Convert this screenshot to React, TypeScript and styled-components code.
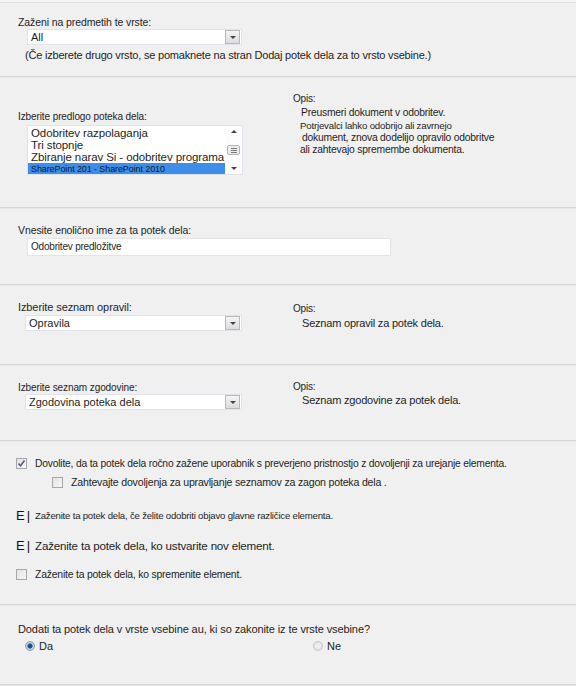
import React from "react";
import styled, { createGlobalStyle } from "styled-components";

const GlobalStyle = createGlobalStyle`
  html, body {
    margin: 0;
    padding: 0;
    background: #f0f0f0;
  }
  body {
    font-family: "Liberation Sans", Arial, sans-serif;
    color: #1e1e1e;
  }
`;

const Page = styled.div`
  width: 576px;
  height: 686px;
  overflow: hidden;
  background: #f0f0f0;
`;

const TopRule = styled.div`
  height: 3px;
  box-sizing: border-box;
  background: #f5f5f5;
  border-bottom: 1px solid #e2e2e2;
`;

// one block of the settings form, with the grey rule under it
const Section = styled.div<{ $h: number; $pt: number }>`
  height: ${(p) => p.$h}px;
  box-sizing: border-box;
  padding: ${(p) => p.$pt}px 0 0 18px;
  border-bottom: 1px solid #d6d6d6;
  box-shadow: 0 1px 0 #e8e8e8;
  display: flex;
`;

const Main = styled.div<{ $wide?: boolean }>`
  width: ${(p) => (p.$wide ? "auto" : "275px")};
  display: flex;
  flex-direction: column;
`;

const Side = styled.div<{ $mt: number }>`
  margin-top: ${(p) => p.$mt}px;
  display: flex;
  flex-direction: column;
`;

const Label = styled.div<{ $size?: number }>`
  font-size: ${(p) => p.$size ?? 10}px;
  line-height: 13px;
  white-space: nowrap;
  letter-spacing: -0.1px;
`;

const Note = styled.div`
  font-size: 11px;
  line-height: 13px;
  white-space: nowrap;
  margin: 4px 0 0 7px;
  letter-spacing: -0.2px;
`;

const DescLine = styled.div<{ $size?: number; $indent?: number; $gap?: number }>`
  font-size: ${(p) => p.$size ?? 10.3}px;
  line-height: 12.3px;
  white-space: nowrap;
  padding-left: ${(p) => p.$indent ?? 7}px;
  margin-top: ${(p) => p.$gap ?? 0}px;
  letter-spacing: -0.2px;
`;

const SelectBox = styled.div<{ $w: number; $ml: number; $mt: number }>`
  margin: ${(p) => p.$mt}px 0 0 ${(p) => p.$ml}px;
  width: ${(p) => p.$w}px;
  height: 16px;
  box-sizing: border-box;
  background: #fff;
  border: 1px solid #e2e3ea;
  display: flex;
  align-items: center;
  font-size: 11px;
`;

const SelectText = styled.span`
  flex: 1;
  padding-left: 3px;
  white-space: nowrap;
`;

const DropButton = styled.span`
  width: 15px;
  height: 14px;
  box-sizing: border-box;
  border: 1px solid #b9b9b9;
  background: linear-gradient(#f4f4f4, #dcdcdc);
  display: flex;
  align-items: center;
  justify-content: center;
  margin-right: 1px;
`;

const Arrow = styled.span<{ $up?: boolean }>`
  width: 0;
  height: 0;
  border-left: 3px solid transparent;
  border-right: 3px solid transparent;
  ${(p) =>
    p.$up ? "border-bottom: 3px solid #444;" : "border-top: 3px solid #444;"}
`;

const ListBox = styled.div`
  margin: 2px 0 0 9px;
  width: 216px;
  height: 50px;
  box-sizing: border-box;
  background: #fff;
  border: 1px solid #e2e3ea;
  display: flex;
  overflow: hidden;
`;

const ListItems = styled.div`
  flex: 1;
  display: flex;
  flex-direction: column;
  padding-top: 1px;
`;

const ListItem = styled.div<{ $selected?: boolean }>`
  font-size: ${(p) => (p.$selected ? 9 : 11.5)}px;
  line-height: 12px;
  padding-left: 3px;
  white-space: nowrap;
  letter-spacing: -0.1px;
  background: ${(p) => (p.$selected ? "#3d8ee8" : "transparent")};
  color: ${(p) => (p.$selected ? "#0c1a33" : "#1e1e1e")};
`;

const ScrollBar = styled.div`
  width: 17px;
  display: flex;
  flex-direction: column;
  align-items: center;
  justify-content: space-between;
  padding: 4px 0;
  box-sizing: border-box;
  background: #fdfdfd;
`;

const Thumb = styled.div`
  width: 13px;
  height: 10px;
  box-sizing: border-box;
  border: 1px solid #b5b5b5;
  border-radius: 2px;
  background: #ececec;
  display: flex;
  flex-direction: column;
  justify-content: center;
  align-items: center;
  gap: 1px;
`;

const Grip = styled.span`
  width: 6px;
  height: 1px;
  background: #7a7a7a;
`;

const TextInput = styled.div`
  margin: 1px 0 0 9px;
  width: 364px;
  height: 18px;
  box-sizing: border-box;
  background: #fff;
  border: 1px solid #e4e4e4;
  font-size: 10px;
  line-height: 16px;
  padding-left: 3px;
  letter-spacing: -0.2px;
`;

const CheckRow = styled.div<{ $ml?: number; $mt: number; $size?: number }>`
  display: flex;
  align-items: center;
  gap: 8px;
  margin: ${(p) => p.$mt}px 0 0 ${(p) => p.$ml ?? 0}px;
  font-size: ${(p) => p.$size ?? 9.5}px;
  white-space: nowrap;
  letter-spacing: -0.2px;
`;

const Box = styled.span`
  width: 11px;
  height: 11px;
  box-sizing: border-box;
  border: 1px solid #a7a7a7;
  background: linear-gradient(135deg, #e2e2e2, #f7f7f7);
  display: flex;
  align-items: center;
  justify-content: center;
  flex: none;
`;

const Broken = styled.span`
  width: 11px;
  font-size: 13px;
  line-height: 13px;
  color: #111;
  flex: none;
  letter-spacing: 2px;
`;

const RadioRow = styled.div`
  display: flex;
  margin: 4px 0 0 7px;
`;

const RadioOption = styled.div<{ $w?: number }>`
  width: ${(p) => (p.$w ? `${p.$w}px` : "auto")};
  display: flex;
  align-items: center;
  gap: 4px;
  font-size: 11px;
`;

const Radio = styled.span<{ $on?: boolean }>`
  width: 10px;
  height: 10px;
  border-radius: 50%;
  box-sizing: border-box;
  border: 1px solid ${(p) => (p.$on ? "#8aa0b8" : "#c4c4c4")};
  background: ${(p) =>
    p.$on
      ? "radial-gradient(circle, #1f4f85 0 2px, #bcd0e4 3px)"
      : "radial-gradient(circle, #f4f4f4, #dedede)"};
  flex: none;
`;

function Select({ value, width, ml, mt }: { value: string; width: number; ml: number; mt: number }) {
  return (
    <SelectBox $w={width} $ml={ml} $mt={mt}>
      <SelectText>{value}</SelectText>
      <DropButton>
        <Arrow />
      </DropButton>
    </SelectBox>
  );
}

function Check({ on }: { on?: boolean }) {
  return (
    <Box>
      {on && (
        <svg width="9" height="9" viewBox="0 0 9 9">
          <path d="M1.5 4.5 L3.5 6.8 L7.5 1.5" fill="none" stroke="#4a5f88" strokeWidth="1.6" />
        </svg>
      )}
    </Box>
  );
}

export default function App() {
  return (
    <>
      <GlobalStyle />
      <Page>
        <TopRule />
        <Section $h={74} $pt={13}>
          <Main>
            <Label $size={10.5}>Zaženi na predmetih te vrste:</Label>
            <Select value="All" width={215} ml={9} mt={0} />
            <Note>(Če izberete drugo vrsto, se pomaknete na stran Dodaj potek dela za to vrsto vsebine.)</Note>
          </Main>
        </Section>

        <Section $h={131} $pt={33}>
          <Main>
            <Label>Izberite predlogo poteka dela:</Label>
            <ListBox>
              <ListItems>
                <ListItem>Odobritev razpolaganja</ListItem>
                <ListItem>Tri stopnje</ListItem>
                <ListItem>Zbiranje narav Si - odobritev programa</ListItem>
                <ListItem $selected>SharePoint 201 - SharePoint 2010</ListItem>
              </ListItems>
              <ScrollBar>
                <Arrow $up />
                <Thumb>
                  <Grip />
                  <Grip />
                  <Grip />
                </Thumb>
                <Arrow />
              </ScrollBar>
            </ListBox>
          </Main>
          <Side $mt={-17}>
            <DescLine $indent={0} $size={10}>Opis:</DescLine>
            <DescLine $indent={8} $gap={2}>Preusmeri dokument v odobritev.</DescLine>
            <DescLine $indent={7} $size={9.7}>Potrjevalci lahko odobrijo ali zavrnejo</DescLine>
            <DescLine $indent={9}>dokument, znova dodelijo opravilo odobritve</DescLine>
            <DescLine $indent={7}>ali zahtevajo spremembe dokumenta.</DescLine>
          </Side>
        </Section>

        <Section $h={77} $pt={16}>
          <Main>
            <Label $size={10.5}>Vnesite enolično ime za ta potek dela:</Label>
            <TextInput>Odobritev predložitve</TextInput>
          </Main>
        </Section>

        <Section $h={80} $pt={16}>
          <Main>
            <Label $size={11}>Izberite seznam opravil:</Label>
            <Select value="Opravila" width={217} ml={7} mt={1} />
          </Main>
          <Side $mt={2}>
            <DescLine $indent={0} $size={10}>Opis:</DescLine>
            <DescLine $indent={9} $size={11} $gap={2}>Seznam opravil za potek dela.</DescLine>
          </Side>
        </Section>

        <Section $h={76} $pt={16}>
          <Main>
            <Label $size={10}>Izberite seznam zgodovine:</Label>
            <Select value="Zgodovina poteka dela" width={217} ml={7} mt={0} />
          </Main>
          <Side $mt={0}>
            <DescLine $indent={0} $size={10}>Opis:</DescLine>
            <DescLine $indent={9} $size={11} $gap={1}>Seznam zgodovine za potek dela.</DescLine>
          </Side>
        </Section>

        <Section $h={164} $pt={17}>
          <Main $wide>
            <CheckRow $mt={0} $ml={-2} $size={10.3}>
              <Check on />
              Dovolite, da ta potek dela ročno zažene uporabnik s preverjeno pristnostjo z dovoljenji za urejanje elementa.
            </CheckRow>
            <CheckRow $mt={7} $ml={34} $size={10.6}>
              <Check />
              Zahtevajte dovoljenja za upravljanje seznamov za zagon poteka dela .
            </CheckRow>
            <CheckRow $mt={21} $ml={-2} $size={9.6}>
              <Broken>E|</Broken>
              Zaženite ta potek dela, če želite odobriti objavo glavne različice elementa.
            </CheckRow>
            <CheckRow $mt={17} $ml={-2} $size={11.6}>
              <Broken>E|</Broken>
              Zaženite ta potek dela, ko ustvarite nov element.
            </CheckRow>
            <CheckRow $mt={17} $ml={-2} $size={10.4}>
              <Check />
              Zaženite ta potek dela, ko spremenite element.
            </CheckRow>
          </Main>
        </Section>

        <Section $h={80} $pt={18}>
          <Main $wide>
            <Label $size={11}>Dodati ta potek dela v vrste vsebine au, ki so zakonite iz te vrste vsebine?</Label>
            <RadioRow>
              <RadioOption $w={288}>
                <Radio $on />
                Da
              </RadioOption>
              <RadioOption>
                <Radio />
                Ne
              </RadioOption>
            </RadioRow>
          </Main>
        </Section>
      </Page>
    </>
  );
}
